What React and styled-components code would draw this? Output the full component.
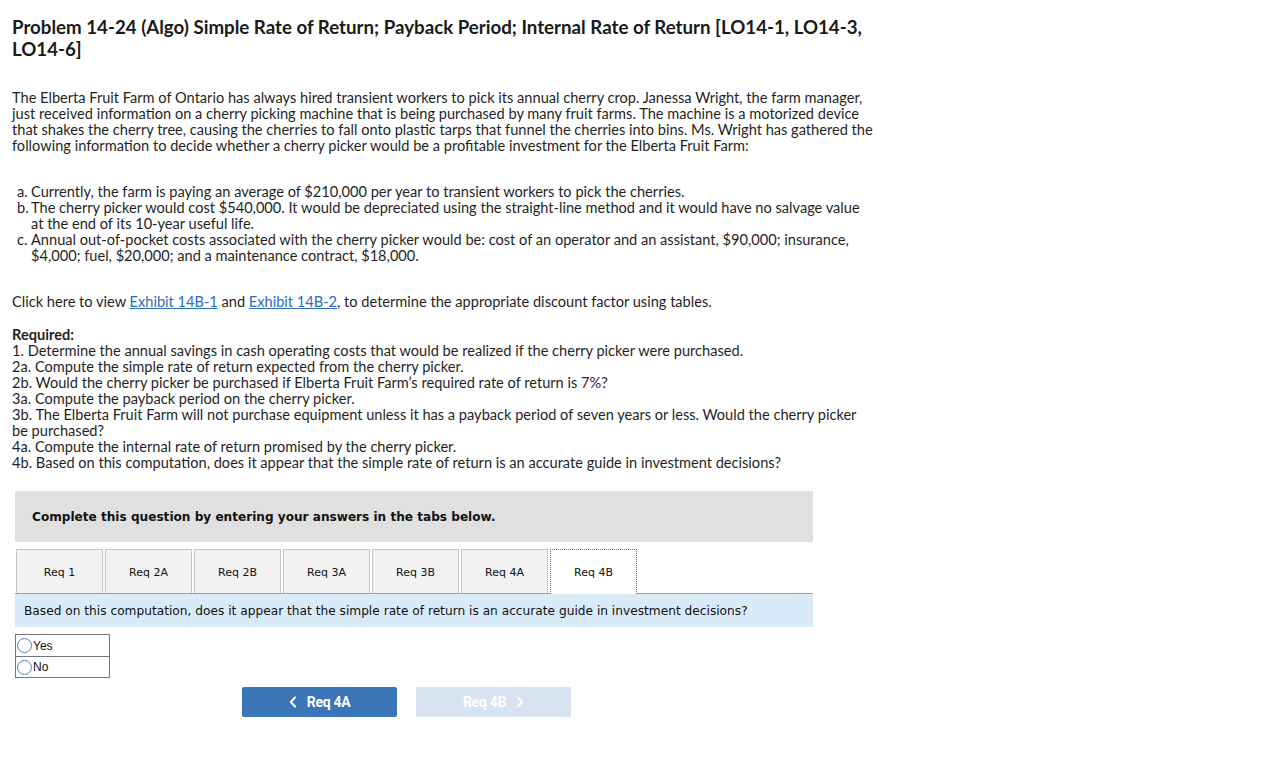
import React from "react";
import styled, { createGlobalStyle } from "styled-components";

const Global = createGlobalStyle`
  html, body { margin: 0; padding: 0; background: #fff; }
  body { font-family: Lato, "Open Sans", sans-serif; color: #1f1f1f; }
`;

const Page = styled.div`
  padding: 16px 0 40px 12px;
  width: 900px;
`;

const Title = styled.h1`
  margin: 0;
  font-size: 18.7px;
  line-height: 22px;
  font-weight: 700;
  color: #1a1a1a;
  width: 860px;
`;

const Para = styled.p`
  margin: ${(p) => p.$mt || 0}px 0 0;
  font-size: 14.6px;
  line-height: 16px;
`;

const List = styled.div`
  margin-top: 30px;
  display: flex;
  flex-direction: column;
  padding-left: 5px;
  font-size: 14.6px;
  line-height: 16px;
`;

const Item = styled.div`
  display: grid;
  grid-template-columns: 14px 1fr;
`;

const Link = styled.a`
  color: #2a6ebb;
  text-decoration: underline;
`;

const Strong = styled.div`
  font-weight: 700;
  margin-top: 17px;
  font-size: 14.6px;
  line-height: 16px;
`;

const Lines = styled.div`
  font-size: 14.6px;
  line-height: 16px;
`;

const Widget = styled.div`
  margin-top: 20px;
  margin-left: 3px;
  width: 798px;
  font-family: "DejaVu Sans", Verdana, sans-serif;
`;

const Banner = styled.div`
  background: #e0e0e0;
  height: 51px;
  display: flex;
  align-items: center;
  padding-left: 17px;
  font-size: 12.1px;
  font-weight: 700;
  color: #111;
`;

const TabRow = styled.div`
  margin-top: 6px;
  display: flex;
  gap: 2px;
  padding-left: 1px;
  border-bottom: 1px solid #a0a0a0;
  height: 45px;
  align-items: flex-end;
`;

const Tab = styled.div`
  width: 87px;
  box-sizing: border-box;
  display: flex;
  align-items: center;
  justify-content: center;
  padding-top: 1px;
  font-size: 11px;
  color: #111;
  background: ${(p) => (p.$active ? "#fff" : "#f2f2f2")};
  border: ${(p) => (p.$active ? "1px dotted #5a6f8a" : "1px solid #c6c6c6")};
  border-bottom: none;
  margin-bottom: ${(p) => (p.$active ? "-1px" : "0")};
  height: ${(p) => (p.$active ? "45px" : "44px")};
`;

const Question = styled.div`
  background: #d9ebf9;
  height: 33px;
  display: flex;
  align-items: center;
  padding-left: 9px;
  font-size: 12.2px;
  color: #111;
`;

const Choices = styled.div`
  margin-top: 7px;
  width: 95px;
  box-sizing: border-box;
  border: 1px solid #777;
  font-family: "Liberation Sans", Arial, sans-serif;
`;

const Choice = styled.label`
  display: flex;
  align-items: center;
  height: 21px;
  font-size: 12px;
  color: #111;
  & + & { border-top: 1px solid #777; height: 20px; }
`;

const Radio = styled.span`
  width: 15px;
  height: 15px;
  box-sizing: border-box;
  border: 1px solid #4a7fd0;
  border-radius: 50%;
  margin: 0 1px 0 1px;
  background: #fff;
`;

const Nav = styled.div`
  margin-top: 9px;
  margin-left: 227px;
  display: flex;
  gap: 19px;
`;

const NavButton = styled.button`
  width: 155px;
  height: 30px;
  border: none;
  border-radius: 2px;
  background: ${(p) => (p.$disabled ? "#d7e3f0" : "#3a75b8")};
  color: #fff;
  font-family: Roboto, "Liberation Sans", sans-serif;
  font-weight: 700;
  font-size: 14px;
  display: flex;
  align-items: center;
  justify-content: center;
  gap: 10px;
  padding: 0;
  letter-spacing: -0.3px;
`;

const Chevron = ({ dir }) => (
  <svg width="8" height="12" viewBox="0 0 8 12">
    <path
      d={dir === "left" ? "M6 1.5 L1.8 6 L6 10.5" : "M2 1.5 L6.2 6 L2 10.5"}
      fill="none"
      stroke="#fff"
      strokeWidth="2"
      strokeLinecap="round"
      strokeLinejoin="round"
    />
  </svg>
);

const tabs = ["Req 1", "Req 2A", "Req 2B", "Req 3A", "Req 3B", "Req 4A", "Req 4B"];

export default function App() {
  return (
    <>
      <Global />
      <Page>
        <Title>
          Problem 14-24 (Algo) Simple Rate of Return; Payback Period; Internal Rate of Return [LO14-1, LO14-3, LO14-6]
        </Title>
        <Para $mt={30}>
          The Elberta Fruit Farm of Ontario has always hired transient workers to pick its annual cherry crop. Janessa Wright, the farm manager,<br />
          just received information on a cherry picking machine that is being purchased by many fruit farms. The machine is a motorized device<br />
          that shakes the cherry tree, causing the cherries to fall onto plastic tarps that funnel the cherries into bins. Ms. Wright has gathered the<br />
          following information to decide whether a cherry picker would be a profitable investment for the Elberta Fruit Farm:
        </Para>
        <List>
          <Item><span>a.</span><span>Currently, the farm is paying an average of $210,000 per year to transient workers to pick the cherries.</span></Item>
          <Item><span>b.</span><span>The cherry picker would cost $540,000. It would be depreciated using the straight-line method and it would have no salvage value<br />at the end of its 10-year useful life.</span></Item>
          <Item><span>c.</span><span>Annual out-of-pocket costs associated with the cherry picker would be: cost of an operator and an assistant, $90,000; insurance,<br />$4,000; fuel, $20,000; and a maintenance contract, $18,000.</span></Item>
        </List>
        <Para $mt={30}>
          Click here to view <Link href="#">Exhibit 14B-1</Link> and <Link href="#">Exhibit 14B-2</Link>, to determine the appropriate discount factor using tables.
        </Para>
        <Strong>Required:</Strong>
        <Lines>
          1. Determine the annual savings in cash operating costs that would be realized if the cherry picker were purchased.<br />
          2a. Compute the simple rate of return expected from the cherry picker.<br />
          2b. Would the cherry picker be purchased if Elberta Fruit Farm’s required rate of return is 7%?<br />
          3a. Compute the payback period on the cherry picker.<br />
          3b. The Elberta Fruit Farm will not purchase equipment unless it has a payback period of seven years or less. Would the cherry picker<br />
          be purchased?<br />
          4a. Compute the internal rate of return promised by the cherry picker.<br />
          4b. Based on this computation, does it appear that the simple rate of return is an accurate guide in investment decisions?
        </Lines>
        <Widget>
          <Banner>Complete this question by entering your answers in the tabs below.</Banner>
          <TabRow>
            {tabs.map((t, i) => (
              <Tab key={t} $active={i === tabs.length - 1}>{t}</Tab>
            ))}
          </TabRow>
          <Question>Based on this computation, does it appear that the simple rate of return is an accurate guide in investment decisions?</Question>
          <Choices>
            <Choice><Radio />Yes</Choice>
            <Choice><Radio />No</Choice>
          </Choices>
          <Nav>
            <NavButton><Chevron dir="left" />Req 4A</NavButton>
            <NavButton $disabled>Req 4B<Chevron dir="right" /></NavButton>
          </Nav>
        </Widget>
      </Page>
    </>
  );
}
